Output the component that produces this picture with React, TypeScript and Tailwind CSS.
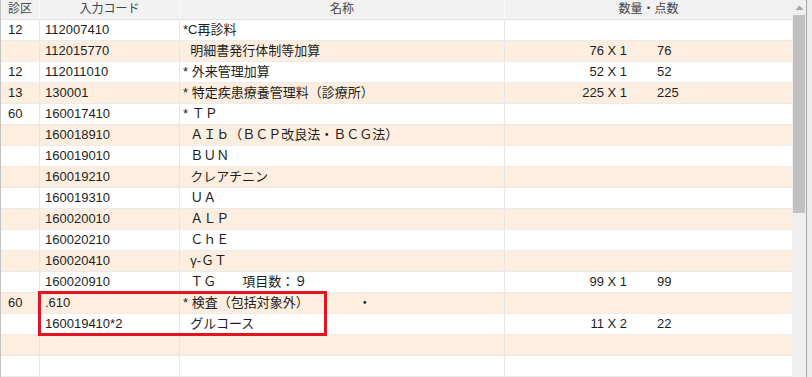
import React from 'react'

type Row = {
  ku?: string
  code?: string
  name?: string
  qty?: string
  pts?: string
  dot?: boolean
}

const ROWS: Row[] = [
  { ku: '12', code: '112007410', name: '*C再診料' },
  { code: '112015770', name: '  明細書発行体制等加算', qty: '76 X 1', pts: '76' },
  { ku: '12', code: '112011010', name: '* 外来管理加算', qty: '52 X 1', pts: '52' },
  { ku: '13', code: '130001', name: '* 特定疾患療養管理料（診療所）', qty: '225 X 1', pts: '225' },
  { ku: '60', code: '160017410', name: '* ＴＰ' },
  { code: '160018910', name: '  ＡＩｂ（ＢＣＰ改良法・ＢＣＧ法）' },
  { code: '160019010', name: '  ＢＵＮ' },
  { code: '160019210', name: '  クレアチニン' },
  { code: '160019310', name: '  ＵＡ' },
  { code: '160020010', name: '  ＡＬＰ' },
  { code: '160020210', name: '  ＣｈＥ' },
  { code: '160020410', name: '  γ-ＧＴ' },
  { code: '160020910', name: '  ＴＧ　　項目数：９', qty: '99 X 1', pts: '99' },
  { ku: '60', code: '.610', name: '* 検査（包括対象外）', dot: true },
  { code: '160019410*2', name: '  グルコース', qty: '11 X 2', pts: '22' },
  {},
  {},
]

const FONT = "font-['Liberation_Sans','Noto_Sans_CJK_JP',sans-serif]"

export default function App() {
  return (
    <div className={`relative flex h-[377px] w-[812px] overflow-hidden bg-white text-[13px] text-[#1e1e1e] ${FONT}`}>
      {/* ── table ── */}
      <div className="flex w-[792px] flex-col border-l border-[#c2c2c2]">
        <div className="grid h-[20px] grid-cols-[39px_140px_325px_1fr] border-b border-[#e4e4e4] bg-[#f2f2f2] text-[12px] leading-[19px] text-[#444]">
          <div className="border-r border-[#fafafa] pl-[7px]">診区</div>
          <div className="border-r border-[#fafafa] text-center">入力コード</div>
          <div className="border-r border-[#fafafa] text-center">名称</div>
          <div className="text-center">数量・点数</div>
        </div>

        {ROWS.map((r, i) => (
          <div
            key={i}
            className={`grid h-[21px] grid-cols-[39px_140px_325px_1fr] border-b border-[#ebebeb] leading-[20px] ${i % 2 === 1 ? 'bg-[#fdeee0]' : 'bg-white'}`}
          >
            <div className="border-r border-[#e6e6e6] pl-[7px]">{r.ku}</div>
            <div className="border-r border-[#e6e6e6] pl-[5px]">{r.code}</div>
            <div className="whitespace-pre border-r border-[#e6e6e6] pl-[3px]">
              {r.name}
              {r.dot && <span className="ml-[56px]">・</span>}
            </div>
            <div className="flex">
              {r.qty && (
                <>
                  <span className="w-[122px] text-right">{r.qty}</span>
                  <span className="ml-[30px]">{r.pts}</span>
                </>
              )}
            </div>
          </div>
        ))}
      </div>

      {/* ── scrollbar ── */}
      <div className="flex w-[20px]">
        <div className="flex w-[14px] flex-col items-center bg-[#efefef]">
          <svg width="9" height="6" viewBox="0 0 9 6" className="mt-[5px]">
            <path d="M4.5 0.5 L8.5 5 L0.5 5 Z" fill="#a3a3a3" />
          </svg>
          <div className="mt-[4px] h-[198px] w-[12px] bg-[#c1c1c1]" />
        </div>
        <div className="w-px bg-[#a6a6a6]" />
        <div className="flex-1 bg-[#ececec]" />
      </div>

      {/* ── highlight box ── */}
      <div className="pointer-events-none absolute left-[38px] top-[291px] h-[45px] w-[289px] border-[3px] border-[#e3141f]" />
    </div>
  )
}
